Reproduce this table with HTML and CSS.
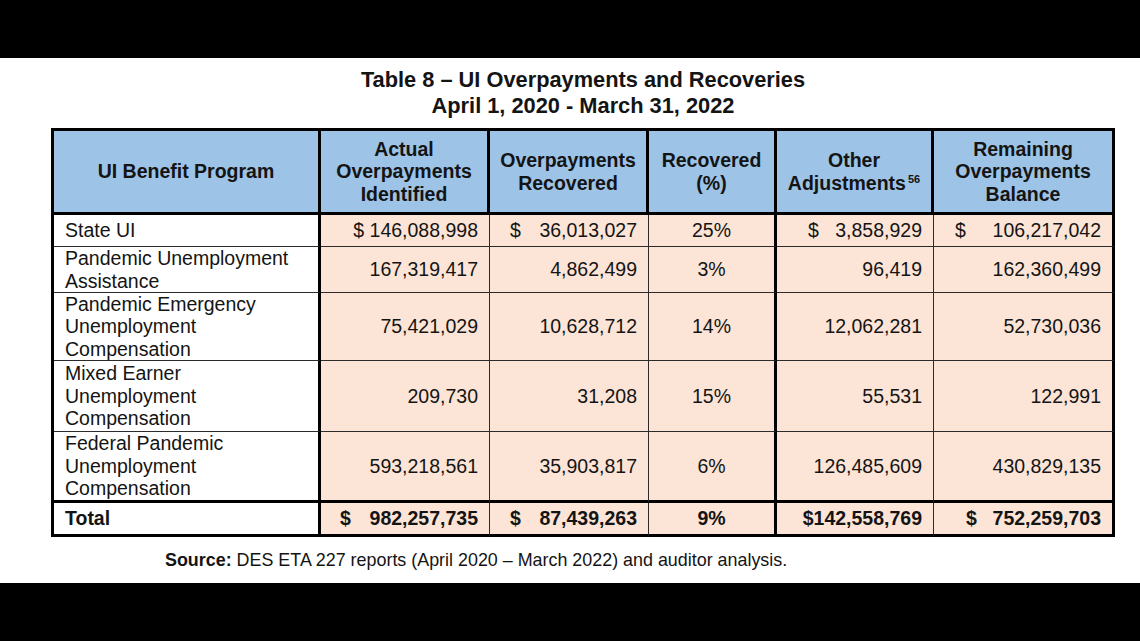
FILE: index.html
```html
<!DOCTYPE html>
<html lang="en">
<head>
<meta charset="utf-8">
<title>Table 8 – UI Overpayments and Recoveries</title>
<link rel="stylesheet" href="styles.css">
</head>
<body>
<div class="bar"></div>
<main class="page">
  <section class="report">
    <h1 class="title">Table 8 – UI Overpayments and Recoveries<br>April 1, 2020 - March 31, 2022</h1>
    <div class="grid">
      <div class="hd c1"><span>UI Benefit Program</span></div>
      <div class="hd"><span>Actual<br>Overpayments<br>Identified</span></div>
      <div class="hd"><span>Overpayments<br>Recovered</span></div>
      <div class="hd"><span>Recovered<br>(%)</span></div>
      <div class="hd"><span>Other<br>Adjustments<sup class="fn">56</sup></span></div>
      <div class="hd last"><span>Remaining<br>Overpayments<br>Balance</span></div>

      <div class="nm c1"><span>State UI</span></div>
      <div class="num c2">$ 146,088,998</div>
      <div class="num c3 acct p20"><span>$</span><span>36,013,027</span></div>
      <div class="pct c4">25%</div>
      <div class="num c5 acct p31"><span>$</span><span>3,858,929</span></div>
      <div class="num c6 acct p21"><span>$</span><span>106,217,042</span></div>

      <div class="nm c1"><span>Pandemic Unemployment<br>Assistance</span></div>
      <div class="num c2">167,319,417</div>
      <div class="num c3">4,862,499</div>
      <div class="pct c4">3%</div>
      <div class="num c5">96,419</div>
      <div class="num c6">162,360,499</div>

      <div class="nm c1"><span>Pandemic Emergency<br>Unemployment<br>Compensation</span></div>
      <div class="num c2">75,421,029</div>
      <div class="num c3">10,628,712</div>
      <div class="pct c4">14%</div>
      <div class="num c5">12,062,281</div>
      <div class="num c6">52,730,036</div>

      <div class="nm c1"><span>Mixed Earner<br>Unemployment<br>Compensation</span></div>
      <div class="num c2">209,730</div>
      <div class="num c3">31,208</div>
      <div class="pct c4">15%</div>
      <div class="num c5">55,531</div>
      <div class="num c6">122,991</div>

      <div class="nm c1 pre"><span>Federal Pandemic<br>Unemployment<br>Compensation</span></div>
      <div class="num c2 pre">593,218,561</div>
      <div class="num c3 pre">35,903,817</div>
      <div class="pct c4 pre">6%</div>
      <div class="num c5 pre">126,485,609</div>
      <div class="num c6 pre">430,829,135</div>

      <div class="nm c1 tot"><span>Total</span></div>
      <div class="num c2 tot acct p19"><span>$</span><span>982,257,735</span></div>
      <div class="num c3 tot acct p20"><span>$</span><span>87,439,263</span></div>
      <div class="pct c4 tot">9%</div>
      <div class="num c5 tot">$142,558,769</div>
      <div class="num c6 tot acct p32"><span>$</span><span>752,259,703</span></div>
    </div>
    <p class="source"><strong>Source:</strong> DES ETA 227 reports (April 2020 – March 2022) and auditor analysis.</p>
  </section>
</main>
<div class="bar"></div>
</body>
</html>
```
FILE: styles.css
```css
* { box-sizing: border-box; }

html, body {
  margin: 0;
  padding: 0;
  background: #000;
}

body {
  font-family: "Liberation Sans", Arial, sans-serif;
  color: #141414;
  width: 1140px;
  height: 641px;
  overflow: hidden;
}

.bar {
  height: 58px;
  background: #000;
}

.page {
  height: 525px;
  background: #fff;
  padding-top: 9px;
}

.report {
  margin-left: 51px;
  width: 1064px;
}

.title {
  margin: 0 0 9px;
  font-size: 21.8px;
  line-height: 26px;
  font-weight: 700;
  text-align: center;
}

.grid {
  display: grid;
  grid-template-columns: 267px 169px 159px 128px 157px 181px;
  grid-template-rows: 84px 32px 46px 68px 71px 71px 34px;
  border-left: 3px solid #000;
  border-top: 3px solid #000;
  font-size: 19.5px;
  line-height: 22.4px;
}

.grid > div {
  border-right: 1px solid #2b2b2b;
  border-bottom: 1px solid #2b2b2b;
  display: flex;
  align-items: center;
  white-space: nowrap;
}

.hd {
  background: #9dc3e6;
  font-weight: 700;
  justify-content: center;
  text-align: center;
  border-right: 3px solid #000 !important;
  border-bottom: 3px solid #000 !important;
}

.fn {
  font-size: 11px;
  line-height: 0;
  margin-left: 2px;
  vertical-align: 7px;
}

.nm {
  background: #fff;
  padding-left: 11px;
}

.c1 { border-right: 3px solid #000 !important; }
.c4 { border-right: 3px solid #000 !important; }
.c6 { border-right: 3px solid #000 !important; }

.num,
.pct {
  background: #fce4d6;
}

.num {
  justify-content: flex-end;
  padding-right: 11px;
}

.pct {
  justify-content: center;
}

.acct {
  justify-content: space-between;
}

.p19 { padding-left: 19px; }
.p20 { padding-left: 20px; }
.p21 { padding-left: 21px; }
.p31 { padding-left: 31px; }
.p32 { padding-left: 32px; }

.pre { border-bottom: 3px solid #000 !important; }

.tot {
  font-weight: 700;
  border-bottom: 3px solid #000 !important;
}

.source {
  margin: 12px 0 0 114px;
  font-size: 17.9px;
  line-height: 22px;
}
```
